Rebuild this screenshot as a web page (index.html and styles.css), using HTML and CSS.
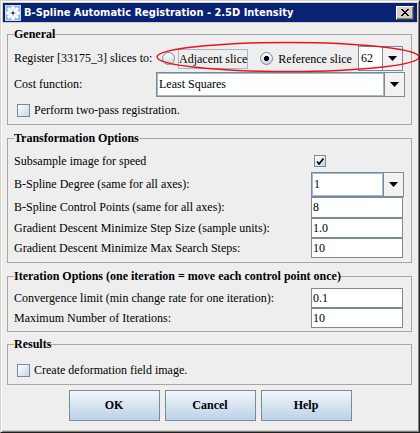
FILE: index.html
```html
<!DOCTYPE html>
<html>
<head>
<meta charset="utf-8">
<link rel="stylesheet" href="styles.css">
</head>
<body>
<div class="window">
  <div class="titlebar">
    <svg class="app-icon" width="16" height="16" viewBox="0 0 16 16">
      <rect x="0.5" y="0.5" width="15" height="15" fill="#8fb0e8" stroke="#c8d8f4"/>
      <path d="M3 3 L13 13 M13 3 L3 13" stroke="#ffffff" stroke-width="3"/>
      <circle cx="8" cy="3" r="2" fill="#ffffff"/>
      <circle cx="8" cy="13" r="2" fill="#ffffff"/>
      <circle cx="3" cy="8" r="2" fill="#ffffff"/>
      <circle cx="13" cy="8" r="2" fill="#ffffff"/>
      <circle cx="8" cy="8" r="1.5" fill="#1a2f80"/>
    </svg>
    <span class="title">B-Spline Automatic Registration - 2.5D Intensity</span>
    <span class="close-btn">
      <svg width="8" height="7" viewBox="0 0 8 7"><path d="M0 0 L7 7 M1 0 L8 7 M7 0 L0 7 M8 0 L1 7" stroke="#000" stroke-width="1"/></svg>
    </span>
  </div>
  <div class="content">
    <fieldset class="group general">
      <legend>General</legend>
      <div class="row r-register">
        <span class="label l-register">Register [33175_3] slices to:</span>
        <span class="radio"></span>
        <span class="radio-text focus">Adjacent slice</span>
        <span class="radio checked r2"></span>
        <span class="radio-text">Reference slice</span>
        <div class="combo combo-small">
          <span class="combo-value">62</span>
          <span class="combo-btn"><svg width="9" height="5" viewBox="0 0 9 5"><polygon points="0,0 9,0 4.5,5" fill="#000"/></svg></span>
        </div>
      </div>
      <div class="row r-cost">
        <span class="label l-cost">Cost function:</span>
        <div class="combo combo-wide focused">
          <span class="combo-value">Least Squares</span>
          <span class="combo-btn"><svg width="9" height="5" viewBox="0 0 9 5"><polygon points="0,0 9,0 4.5,5" fill="#000"/></svg></span>
        </div>
      </div>
      <div class="row r-check">
        <span class="checkbox"></span>
        <span class="check-text">Perform two-pass registration.</span>
      </div>
    </fieldset>

    <fieldset class="group transform">
      <legend>Transformation Options</legend>
      <div class="form-grid t-grid">
        <span class="label">Subsample image for speed</span>
        <span class="ctrl"><span class="checkbox checked-box"><svg width="8" height="7" viewBox="0 0 8 7"><path d="M1 3.5 L3 6 L7.5 0.5" stroke="#000" stroke-width="1.6" fill="none"/></svg></span></span>
        <span class="label">B-Spline Degree (same for all axes):</span>
        <div class="combo combo-degree focused">
          <span class="combo-value">1</span>
          <span class="combo-btn"><svg width="9" height="5" viewBox="0 0 9 5"><polygon points="0,0 9,0 4.5,5" fill="#000"/></svg></span>
        </div>
        <span class="label">B-Spline Control Points (same for all axes):</span>
        <span class="field">8</span>
        <span class="label">Gradient Descent Minimize Step Size (sample units):</span>
        <span class="field">1.0</span>
        <span class="label">Gradient Descent Minimize Max Search Steps:</span>
        <span class="field">10</span>
      </div>
    </fieldset>

    <fieldset class="group iteration">
      <legend>Iteration Options (one iteration = move each control point once)</legend>
      <div class="form-grid i-grid">
        <span class="label">Convergence limit (min change rate for one iteration):</span>
        <span class="field">0.1</span>
        <span class="label">Maximum Number of Iterations:</span>
        <span class="field">10</span>
      </div>
    </fieldset>

    <fieldset class="group results">
      <legend>Results</legend>
      <div class="row r-check">
        <span class="checkbox"></span>
        <span class="check-text">Create deformation field image.</span>
      </div>
    </fieldset>

    <div class="buttons">
      <button class="btn">OK</button>
      <button class="btn">Cancel</button>
      <button class="btn">Help</button>
    </div>
  </div>
  <svg class="annotation" width="420" height="433" viewBox="0 0 420 433">
    <ellipse cx="288" cy="57" rx="131" ry="14.5" fill="none" stroke="#e8141c" stroke-width="1.4"/>
  </svg>
</div>
</body>
</html>
```

FILE: styles.css
```css
* { box-sizing: border-box; }

body {
  margin: 0;
  background: #ffffff;
}

.window {
  position: relative;
  width: 420px;
  height: 433px;
  display: flex;
  flex-direction: column;
  background: #d4d0c8;
  border: 1px solid;
  border-color: #d4d0c8 #202020 #202020 #d4d0c8;
  box-shadow: inset 1px 1px #ffffff, inset -1px -1px #808080;
  padding: 2px;
  font-family: "Liberation Serif", "Times New Roman", serif;
  font-size: 12px;
  color: #000000;
  overflow: hidden;
}

.titlebar {
  flex: none;
  height: 19px;
  display: flex;
  align-items: center;
  padding-left: 2px;
  background: #0a2274;
  color: #ffffff;
}

.app-icon { flex: none; }

.title {
  margin-left: 3px;
  font-family: "DejaVu Sans Condensed", "DejaVu Sans", sans-serif;
  font-weight: bold;
  font-size: 11px;
  white-space: nowrap;
}

.close-btn {
  margin-left: auto;
  margin-right: 3px;
  width: 18px;
  height: 14px;
  display: flex;
  align-items: center;
  justify-content: center;
  background: #d4d0c8;
  border: 1px solid;
  border-color: #ffffff #404040 #404040 #ffffff;
  box-shadow: inset -1px -1px #808080;
}

.content {
  flex: 1;
  margin-top: 1px;
  margin-left: -1px;
  margin-right: -1px;
  background: #eeeeee;
  padding-top: 4px;
}

.group {
  margin: 0 6px 0 5px;
  padding: 0 6px;
  border: 1px solid #a6a6a6;
  min-width: 0;
}

.group legend {
  padding: 0;
  font-weight: bold;
  font-size: 12px;
  line-height: 14px;
}

.transform, .iteration { margin-top: 6px; }
.results { margin-top: 5px; }

.general { padding-top: 5px; padding-bottom: 1px; }
.transform { padding-top: 5px; padding-bottom: 4px; }
.iteration { padding-top: 5px; padding-bottom: 3px; }
.results { padding-top: 6px; padding-bottom: 1px; }

.row {
  display: flex;
  align-items: center;
}

.label {
  white-space: nowrap;
}

.r-register { height: 25px; }
.l-register { flex: none; width: 148px; }

.radio {
  flex: none;
  width: 13px;
  height: 13px;
  border-radius: 50%;
  border: 1px solid #7a8a99;
  background: linear-gradient(#ffffff, #c5d6e8);
}

.radio.checked {
  background: radial-gradient(circle, #000000 0 2.4px, transparent 2.9px), linear-gradient(#ffffff, #c5d6e8);
}

.r2 { margin-left: 12px; }

.radio-text {
  margin-left: 5px;
  white-space: nowrap;
  line-height: 16px;
}

.radio-text.focus {
  margin-left: 3px;
  border: 1px solid #a3b8cc;
  padding: 1px 0 1px 0;
}

.combo {
  display: flex;
  height: 25px;
  border: 1px solid #7a8a99;
  background: #ffffff;
}

.combo-value {
  flex: 1;
  display: flex;
  align-items: center;
  padding-left: 2px;
  white-space: nowrap;
}

.combo.focused .combo-value {
  box-shadow: inset 0 0 0 1px #a3b8cc;
}

.combo-btn {
  flex: none;
  width: 20px;
  display: flex;
  align-items: center;
  justify-content: center;
  border-left: 1px solid #7a8a99;
  background: #f2f2f2;
}

.combo-small {
  flex: none;
  width: 45px;
  margin-left: 6px;
}

.r-cost { height: 25px; margin-top: 1px; }
.l-cost { flex: none; width: 142px; }
.combo-wide { flex: 1; }

.r-check { height: 26px; }

.checkbox {
  flex: none;
  width: 13px;
  height: 13px;
  margin-left: 3px;
  border: 1px solid #7a8a99;
  background: linear-gradient(135deg, #ffffff, #c5d6e8);
}

.check-text {
  margin-left: 4px;
  white-space: nowrap;
}

.form-grid {
  display: grid;
  grid-template-columns: 297px 92px;
  align-items: center;
}

.t-grid { grid-template-rows: 22px 25px 21px 20px 20px; }
.t-grid .combo-degree { margin-top: -1px; height: 25px; margin-right: -1px; }
.t-grid .field:nth-of-type(1) { margin-top: 1px; }

.i-grid { grid-template-rows: 20px 20px; }

.ctrl { display: flex; align-items: center; height: 100%; }

.checked-box {
  width: 12px;
  height: 12px;
  margin-left: 3px;
  display: flex;
  align-items: center;
  justify-content: center;
}

.field {
  height: 100%;
  display: flex;
  align-items: center;
  padding-left: 1px;
  background: #ffffff;
  border: 1px solid #7a8a99;
}

.buttons {
  margin-top: 5px;
  display: flex;
  justify-content: center;
  gap: 5px;
}

.btn {
  width: 91px;
  height: 31px;
  padding: 0;
  font-family: "Liberation Serif", "Times New Roman", serif;
  font-weight: bold;
  font-size: 12px;
  color: #000000;
  border: 1px solid #7a8a99;
  background: linear-gradient(#f2f6fb, #bcd1e7);
}

.annotation {
  position: absolute;
  left: -1px;
  top: -1px;
  pointer-events: none;
}
```
